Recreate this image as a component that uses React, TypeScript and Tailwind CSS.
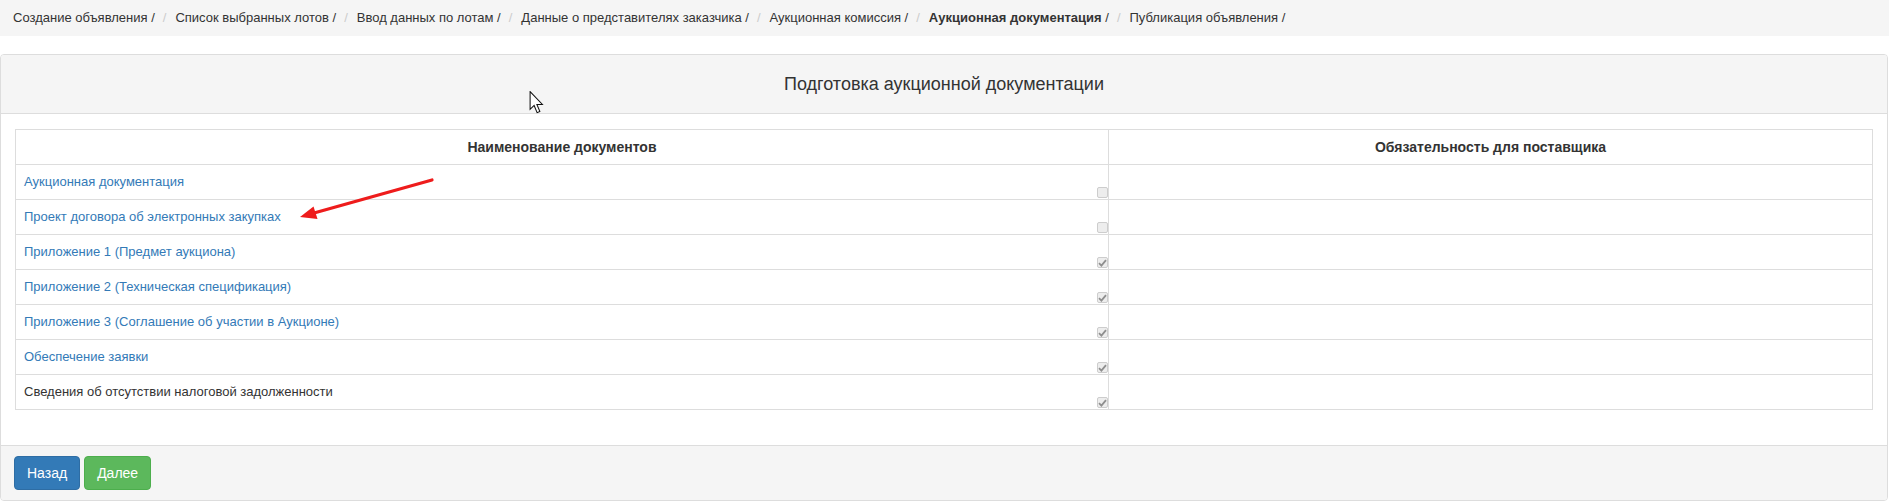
import React from 'react'

const crumbs = [
  { label: 'Создание объявления' },
  { label: 'Список выбранных лотов' },
  { label: 'Ввод данных по лотам' },
  { label: 'Данные о представителях заказчика' },
  { label: 'Аукционная комиссия' },
  { label: 'Аукционная документация', active: true },
  { label: 'Публикация объявления' },
]

const docs = [
  { name: 'Аукционная документация', link: true, checked: false },
  { name: 'Проект договора об электронных закупках', link: true, checked: false },
  { name: 'Приложение 1 (Предмет аукциона)', link: true, checked: true },
  { name: 'Приложение 2 (Техническая спецификация)', link: true, checked: true },
  { name: 'Приложение 3 (Соглашение об участии в Аукционе)', link: true, checked: true },
  { name: 'Обеспечение заявки', link: true, checked: true },
  { name: 'Сведения об отсутствии налоговой задолженности', link: false, checked: true },
]

/** Disabled checkbox as the browser greys it out. */
function DisabledBox({ checked }: { checked: boolean }) {
  return (
    <span className="mb-px flex h-[11px] w-[11px] shrink-0 items-center justify-center rounded-[2px] border border-[#cdcdcd] bg-[#ededed]">
      {checked && (
        <svg width="9" height="8" viewBox="0 0 9 8">
          <path d="M1 4.2 L3.4 6.6 L8 1.2" fill="none" stroke="#8f8f8f" strokeWidth="1.8" />
        </svg>
      )}
    </span>
  )
}

export default function App() {
  return (
    <div className="relative min-h-screen bg-white font-['Liberation_Sans',Arial,sans-serif] text-[13px] text-[#333]">
      <ol className="flex h-[36px] items-center gap-[3px] bg-[#f5f5f5] px-[13px]">
        {crumbs.map((c, i) => (
          <li key={i} className="flex items-center whitespace-nowrap">
            {i > 0 && <span className="pr-[9px] pl-[5px] text-[#ccc]">/</span>}
            {c.active ? <b>{c.label}</b> : c.label}
            <span>&nbsp;/</span>
          </li>
        ))}
      </ol>

      <div className="mt-[18px] mr-px overflow-hidden rounded-[4px] border border-[#ddd]">
        <div className="flex h-[59px] items-center justify-center border-b border-[#ddd] bg-[#f5f5f5] text-[18px]">
          Подготовка аукционной документации
        </div>

        <div className="px-[14px] pt-[15px] pb-[35px]">
          <table className="w-full border-collapse border border-[#ddd]">
            <thead>
              <tr className="h-[35px]">
                <th className="w-[1093px] border border-[#ddd] px-2 text-center text-[14px] font-bold">
                  Наименование документов
                </th>
                <th className="border border-[#ddd] px-2 text-center text-[14px] font-bold">
                  Обязательность для поставщика
                </th>
              </tr>
            </thead>
            <tbody>
              {docs.map((d) => (
                <tr key={d.name} className="h-[35px]">
                  <td className="border border-[#ddd] p-0">
                    <div className="flex h-[34px] items-end justify-between">
                      <span
                        className={`self-center pl-[8px] ${d.link ? 'text-[#337ab7]' : 'text-[#333]'}`}
                      >
                        {d.name}
                      </span>
                      <DisabledBox checked={d.checked} />
                    </div>
                  </td>
                  <td className="border border-[#ddd]" />
                </tr>
              ))}
            </tbody>
          </table>
        </div>

        <div className="flex gap-[4px] border-t border-[#ddd] bg-[#f5f5f5] px-[13px] py-[10px]">
          <button className="h-[34px] rounded-[4px] border border-[#2e6da4] bg-[#337ab7] px-[12px] text-[14px] text-white">
            Назад
          </button>
          <button className="h-[34px] rounded-[4px] border border-[#4cae4c] bg-[#5cb85c] px-[12px] text-[14px] text-white">
            Далее
          </button>
        </div>
      </div>

      {/* red annotation arrow */}
      <svg
        className="pointer-events-none absolute top-[175px] left-[295px]"
        width="145"
        height="50"
        viewBox="0 0 145 50"
      >
        <line x1="137" y1="5" x2="19" y2="38" stroke="#ee1c1c" strokeWidth="3.2" strokeLinecap="round" />
        <polygon points="5,42 22.5,44 18.5,31.5" fill="#ee1c1c" />
      </svg>

      {/* mouse cursor */}
      <svg
        className="pointer-events-none absolute top-[91px] left-[529px]"
        width="16"
        height="23"
        viewBox="0 0 13 20"
      >
        <path
          d="M0.5 0.5 L0.5 16 L4 12.6 L6.6 18.8 L9 17.8 L6.4 11.7 L11.2 11.7 Z"
          fill="#fff"
          stroke="#111"
          strokeWidth="0.9"
          strokeLinejoin="miter"
        />
      </svg>
    </div>
  )
}
